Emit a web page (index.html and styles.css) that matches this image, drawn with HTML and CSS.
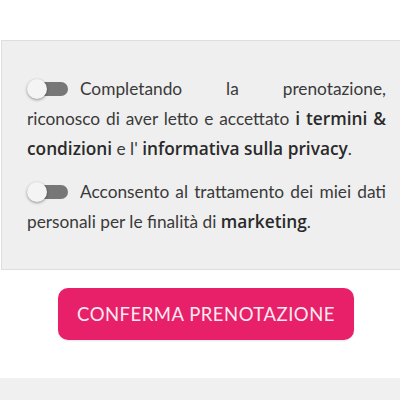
FILE: index.html
```html
<!DOCTYPE html>
<html lang="it">
<head>
  <meta charset="UTF-8" />
  <meta name="viewport" content="width=device-width, initial-scale=1.0"/>
  <title>Conferma prenotazione</title>
  <link rel="stylesheet" href="styles.css">
</head>
<body>
  <div class="consents">
    <p class="consent">
      <span class="consent-lead"><span class="toggle"><span class="knob"></span></span>Completando la prenotazione,</span>
      riconosco di aver letto e accettato <b>i termini &amp; condizioni</b> e l' <b>informativa sulla privacy</b>.
    </p>
    <p class="consent"><span class="toggle"><span class="knob"></span></span>Acconsento al trattamento dei miei dati personali per le finalità di <b>marketing</b>.</p>
  </div>

  <div class="actions">
    <button class="confirm">Conferma prenotazione</button>
  </div>

  <div class="footer-band"></div>
</body>
</html>
```

FILE: styles.css
```css
body {
  margin: 0;
  font-family: Lato, 'Open Sans', sans-serif;
  color: #3a3a3a;
  background: #fff;
  overflow: hidden;
}

/* Consent box */
.consents {
  margin: 40px -12px 0 1px;
  padding: 33px 25px 32px 25px;
  background: #efefef;
  border: 1px solid #dedede;
}

.consent {
  margin: 0;
  font-size: 17.3px;
  line-height: 30px;
  text-align: justify;
}

.consent + .consent {
  margin-top: 13px;
}

.consent-lead {
  display: block;
  text-align-last: justify;
}

.consent b {
  font-family: 'Open Sans', sans-serif;
  font-weight: 600;
  color: #2a2a2a;
}

/* Switch */
.toggle {
  position: relative;
  display: inline-block;
  width: 41px;
  height: 20px;
  margin-right: 12px;
  vertical-align: -4px;
}

.toggle:before {
  content: '';
  position: absolute;
  left: 6px;
  right: 0;
  top: 3px;
  height: 14px;
  border-radius: 7px;
  background: #777;
}

.knob {
  position: absolute;
  left: 0;
  top: 0;
  width: 20px;
  height: 20px;
  border-radius: 50%;
  background: #f4f4f4;
  box-shadow: 0 1px 3px rgba(0, 0, 0, 0.4);
}

/* Button */
.actions {
  display: flex;
  justify-content: center;
  padding: 18px 0 38px;
}

.confirm {
  width: 296px;
  height: 52px;
  margin-left: 12px;
  background: #e8206a;
  color: #fbeaf0;
  border: none;
  border-radius: 10px;
  font-family: Lato, sans-serif;
  font-size: 18.5px;
  letter-spacing: 0.5px;
  text-transform: uppercase;
  box-shadow: 0 1px 2px rgba(0, 0, 0, 0.1);
}

.footer-band {
  height: 30px;
  background: #f0f0f0;
}
```
